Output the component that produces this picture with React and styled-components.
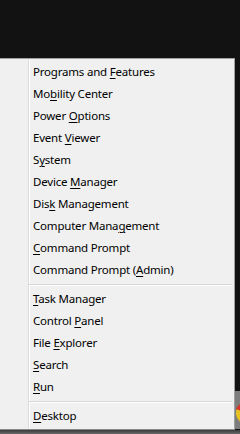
import React from "react";
import styled, { createGlobalStyle } from "styled-components";

const Global = createGlobalStyle`
  html, body { margin: 0; padding: 0; background: #121212; }
  body { width: 240px; height: 434px; overflow: hidden; }
`;

const Screen = styled.div`
  display: flex;
  flex-direction: column;
  height: 434px;
  padding-top: 58px;
  box-sizing: border-box;
`;

const Row = styled.div`
  display: flex;
  align-items: stretch;
`;

const Menu = styled.div`
  width: 235px;
  box-sizing: border-box;
  border-top: 1px solid #a0a0a0;
  border-right: 1px solid #a0a0a0;
  border-bottom: 1px solid #8a8a8a;
  padding: 2px 0;
  background:
    linear-gradient(to right, transparent 28px, #dcdcdc 28px, #dcdcdc 29px, #ffffff 29px, #ffffff 30px, transparent 30px),
    #f0f0f0;
  font-family: "Noto Sans", "Open Sans", sans-serif;
  font-size: 11.5px;
  letter-spacing: -0.2px;
  color: #000;
`;

const Item = styled.div`
  height: 22px;
  line-height: 22px;
  padding-left: 33px;
  white-space: nowrap;
`;

const Key = styled.span`
  text-decoration: underline;
  text-underline-offset: 2px;
  text-decoration-thickness: 1px;
`;

const Separator = styled.div`
  height: 7px;
  box-sizing: border-box;
  padding-top: 3px;
  margin: 0 2px 0 29px;
  &::before {
    content: "";
    display: block;
    height: 1px;
    background: #d7d7d7;
    border-bottom: 1px solid #ffffff;
  }
`;

const Side = styled.div`
  flex: 1;
  display: flex;
  flex-direction: column;
  justify-content: flex-end;
  padding-bottom: 1px;
`;

const Bottom = styled.div`
  flex: 1;
  background: linear-gradient(#3a3a3a, #6a6a6a);
`;

const entries = [
  ["Programs and ", "F", "eatures"],
  ["Mo", "b", "ility Center"],
  ["Power ", "O", "ptions"],
  ["Event ", "V", "iewer"],
  ["S", "y", "stem"],
  ["Device ", "M", "anager"],
  ["Dis", "k", " Management"],
  ["Computer Mana", "g", "ement"],
  ["", "C", "ommand Prompt"],
  ["Command Prompt (", "A", "dmin)"],
  null,
  ["", "T", "ask Manager"],
  ["Control ", "P", "anel"],
  ["File ", "E", "xplorer"],
  ["", "S", "earch"],
  ["", "R", "un"],
  null,
  ["", "D", "esktop"],
];

export default function App() {
  return (
    <>
      <Global />
      <Screen>
        <Row>
          <Menu>
            {entries.map((e, i) =>
              e === null ? (
                <Separator key={i} />
              ) : (
                <Item key={i}>
                  {e[0]}
                  <Key>{e[1]}</Key>
                  {e[2]}
                </Item>
              )
            )}
          </Menu>
          <Side>
            <svg width="5" height="38" viewBox="0 0 5 38">
              <rect x="0" y="0" width="5" height="38" fill="#7d7d7d" />
              <circle cx="12" cy="22" r="11" fill="#e8c320" />
              <path d="M1 18 A11 11 0 0 1 12 11 L12 22 Z" fill="#d8332a" />
            </svg>
          </Side>
        </Row>
        <Bottom />
      </Screen>
    </>
  );
}
